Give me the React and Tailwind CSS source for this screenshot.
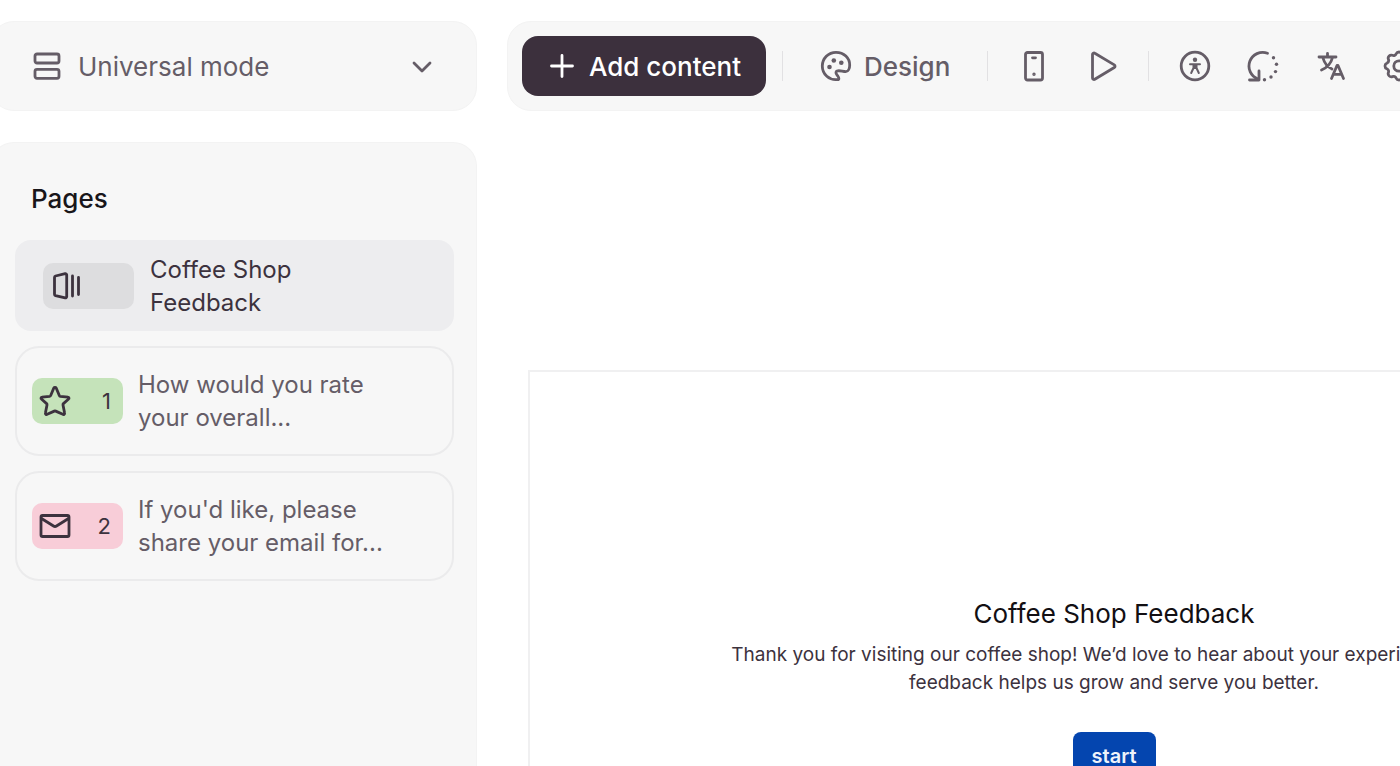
import React from "react";

// Shared props for the outlined icons
const stroke = {
  fill: "none",
  stroke: "currentColor",
  strokeWidth: 2.8,
  strokeLinecap: "round",
  strokeLinejoin: "round",
  "aria-hidden": true,
};

const RowsIcon = () => (
  <svg {...stroke} viewBox="0 0 30 30" className="size-[30px] shrink-0">
    <rect x="3" y="3" width="24" height="9" rx="2" />
    <rect x="3" y="18.300" width="24" height="9" rx="2" />
  </svg>
);

const ChevronIcon = () => (
  <svg {...stroke} viewBox="0 0 20 20" className="size-5 shrink-0">
    <path d="M2 7l8 8 8-8" />
  </svg>
);

const PlusIcon = () => (
  <svg {...stroke} viewBox="0 0 24 24" className="size-6 shrink-0">
    <path d="M12 1.500v21M1.500 12h21" />
  </svg>
);

const PaletteIcon = () => (
  <svg {...stroke} viewBox="0 0 32 32" className="size-8 shrink-0">
    <path d="M18.500 29.500C9 31 2.300 24 2.300 16A13.700 13.700 0 0 1 16 2.300c8 0 13.700 5.700 13.700 12.700 0 3.500-1.500 6.700-4 6.700-3 0-6-1.700-8.700-.7-2 1-.5 3.500.8 5 .9 1.200 1.200 2.800.7 3.500z" />
    <g fill="currentColor" stroke="none">
      <circle cx="9.500" cy="17" r="2.300" />
      <circle cx="13.800" cy="10.500" r="2.300" />
      <circle cx="21.300" cy="12.700" r="2.300" />
    </g>
  </svg>
);

const PhoneIcon = () => (
  <svg {...stroke} viewBox="0 0 32 32" className="size-8">
    <rect x="7.500" y="2.500" width="17" height="27.500" rx="2" />
    <path d="M14.500 7.800h3" />
    <circle cx="16" cy="24.300" r=".7" strokeWidth="2" />
  </svg>
);

const PlayIcon = () => (
  <svg {...stroke} viewBox="0 0 32 32" className="size-8">
    <path d="M6.500 4.500v23.500a1.500 1.500 0 0 0 2.300 1.300l19.500-11.800a1.500 1.500 0 0 0 0-2.600L8.800 3.200a1.500 1.500 0 0 0-2.300 1.300z" />
  </svg>
);

const AccessibilityIcon = () => (
  <svg {...stroke} viewBox="0 0 32 32" className="size-8">
    <circle cx="16" cy="16" r="13.800" />
    <circle cx="16" cy="9.800" r="2.200" fill="currentColor" stroke="none" />
    <path strokeWidth="2" d="M11 14.300h10M14.500 14.500v3.500l-2.300 5M17.500 14.500v3.500l2.300 5M15 15h2v3h-2z" />
  </svg>
);

const ResetIcon = () => (
  <svg {...stroke} viewBox="0 0 32 32" className="size-8">
    <path d="M20.500 3.200A13.500 13.500 0 1 0 11 29" />
    <path d="M2.500 30h9.500v-9" />
    <g fill="currentColor" stroke="none">
      <circle cx="26.500" cy="7.800" r="1.700" />
      <circle cx="29.500" cy="14.300" r="1.700" />
      <circle cx="28.500" cy="21.600" r="1.700" />
      <circle cx="24" cy="27" r="1.700" />
      <circle cx="17.500" cy="29.800" r="1.700" />
    </g>
  </svg>
);

const TranslateIcon = () => (
  <svg {...stroke} viewBox="0 0 32 32" className="size-8">
    <path d="M4 7h17M12.500 3.500V7M17.500 7.500c-1.500 6-5 10-11 12.500M8 8c1.500 5.500 4.500 9 9 11" />
    <path d="M16.500 28.500L22 15.500h1l5.500 13M19 24.300h7.500" />
  </svg>
);

const GearIcon = () => (
  <svg {...stroke} viewBox="0 0 32 32" className="size-8">
    <path d="M13.200 3.800c1-2.400 4.600-2.400 5.600 0 .6 1.500 2.300 2.200 3.800 1.500 2.400-1 5 1.600 4 4-.6 1.500.1 3.200 1.600 3.900 2.400 1 2.400 4.600 0 5.600-1.500.6-2.200 2.300-1.600 3.800 1 2.400-1.600 5-4 4-1.500-.6-3.200.1-3.800 1.600-1 2.400-4.600 2.400-5.600 0-.6-1.500-2.300-2.200-3.800-1.600-2.400 1-5-1.600-4-4 .6-1.500-.1-3.200-1.600-3.800-2.400-1-2.400-4.600 0-5.600 1.500-.7 2.200-2.400 1.600-3.900-1-2.400 1.600-5 4-4 1.500.7 3.200 0 3.800-1.500z" />
    <circle cx="16" cy="16" r="5.200" />
  </svg>
);

const WelcomeIcon = () => (
  <svg {...stroke} viewBox="0 0 32 32" className="size-8">
    <path d="M5.500 6l9.700-2.300a1.300 1.300 0 0 1 1.500 1.200v21.800a1.300 1.300 0 0 1-1.500 1.200L5.500 25.600a1.500 1.500 0 0 1-1-1.400V7.400A1.500 1.500 0 0 1 5.500 6z" />
    <path d="M22.500 6v20M28.500 7.500v17" />
  </svg>
);

const StarIcon = () => (
  <svg {...stroke} viewBox="0 0 32 32" className="size-8">
    <path d="M14.700 3.200a1.500 1.500 0 0 1 2.600 0l3 7.300q.3.700 1 .8l7.700.9a1 1 0 0 1 .6 1.800l-5.200 4.600q-.6.600-.4 1.400l1.600 8a1.200 1.200 0 0 1-1.800 1.300l-7.100-3.200q-.7-.3-1.400 0l-7.100 3.200a1.200 1.200 0 0 1-1.800-1.300l1.600-8q.2-.8-.4-1.400L2.400 14a1 1 0 0 1 .6-1.800l7.700-.9q.7-.1 1-.8z" />
  </svg>
);

const MailIcon = () => (
  <svg {...stroke} viewBox="0 0 32 32" className="size-8">
    <rect x="2" y="5.500" width="28" height="21" rx="1.500" />
    <path d="M2.500 8.500L14.500 16q1.500 1 3 0l12-7.500" />
  </svg>
);

const Divider = () => <span className="h-[30px] w-px shrink-0 bg-[#e2e1e3]" />;

const toolGroups = [
  [
    { label: "Mobile preview", Icon: PhoneIcon },
    { label: "Preview", Icon: PlayIcon },
  ],
  [
    { label: "Accessibility", Icon: AccessibilityIcon },
    { label: "Reset", Icon: ResetIcon },
    { label: "Translate", Icon: TranslateIcon },
    { label: "Settings", Icon: GearIcon },
  ],
];

const questions = [
  { number: 1, text: "How would you rate your overall...", Icon: StarIcon, chip: "bg-[#c5e3ba]" },
  { number: 2, text: "If you'd like, please share your email for...", Icon: MailIcon, chip: "bg-[#f8cdd8]" },
];

const chipClasses = "flex h-[46px] w-[91px] shrink-0 items-center justify-between rounded-[10px] pl-[7px] pr-3 text-[#3c323e]";

function Sidebar() {
  return (
    <aside className="-ml-2.5 flex w-[487px] shrink-0 flex-col gap-[31px]">
      <div className="flex h-[90px] items-center rounded-3xl border border-[#f3f3f3] bg-[#f7f7f7] pl-[41px] pr-[44px] text-[#655d67]">
        <RowsIcon />
        <select aria-label="Form mode" className="min-w-0 flex-1 appearance-none bg-transparent pl-4 pt-0.5 text-[26px] leading-8">
          <option>Universal mode</option>
        </select>
        <ChevronIcon />
      </div>

      <nav aria-labelledby="pages-title" className="flex flex-1 flex-col rounded-t-3xl border border-b-0 border-[#f3f3f3] bg-[#f7f7f7] pl-6 pr-[22px] pt-10">
        <h2 id="pages-title" className="pl-4 text-[26px] font-medium leading-8 text-[#19161a]">
          Pages
        </h2>
        <ul className="mt-[25px] flex flex-col gap-[15px]">
          <li>
            <button className="flex h-[91px] w-full items-center gap-4 rounded-2xl bg-[#ededef] pl-7 text-left">
              <span className={`${chipClasses} bg-[#dddddf]`}>
                <WelcomeIcon />
              </span>
              <span className="w-[252px] text-2xl leading-[33px] text-[#3c323e]">Coffee Shop Feedback</span>
            </button>
          </li>
          {questions.map(({ number, text, Icon, chip }) => (
            <li key={number}>
              <button className="flex h-[110px] w-full items-center gap-[15px] rounded-3xl border-2 border-[#ebebec] pl-[15px] text-left">
                <span className={`${chipClasses} ${chip}`}>
                  <Icon />
                  <span className="text-[22px]">{number}</span>
                </span>
                <span className="w-[252px] text-2xl leading-[33px] text-[#655d67]">{text}</span>
              </button>
            </li>
          ))}
        </ul>
      </nav>
    </aside>
  );
}

function Toolbar() {
  return (
    <div className="flex h-[90px] w-full min-w-[1193px] shrink-0 items-center rounded-3xl border border-[#f3f3f3] bg-[#f7f7f7] pl-3.5 text-[#655d67]">
      <button className="mr-4 flex h-[60px] shrink-0 items-center gap-[15px] rounded-2xl bg-[#3c303d] pl-7 pr-[25px] text-[26px] font-medium text-white">
        <PlusIcon />
        Add content
      </button>
      <Divider />
      <button className="flex shrink-0 items-center gap-3 px-[37px] text-[26px] font-medium">
        <PaletteIcon />
        Design
      </button>
      {toolGroups.map((tools, i) => (
        <React.Fragment key={i}>
          <Divider />
          <div className="flex shrink-0 gap-9 px-[30px]">
            {tools.map(({ label, Icon }) => (
              <button key={label} aria-label={label}>
                <Icon />
              </button>
            ))}
          </div>
        </React.Fragment>
      ))}
    </div>
  );
}

function FormPreview() {
  return (
    <section className="ml-[21px] mt-[259px] flex w-[1172px] flex-1 flex-col items-center border-2 border-b-0 border-[#f0f0f1] pt-[222px] text-center">
      <h1 className="text-[26px] leading-10 text-[#120f13]">Coffee Shop Feedback</h1>
      <p className="mt-[7px] text-[19px] leading-7 text-[#3c323e]">
        Thank you for visiting our coffee shop! We’d love to hear about your experience. Your
        <br />
        feedback helps us grow and serve you better.
      </p>
      <button className="mt-[35px] h-12 shrink-0 rounded-lg bg-[#0445af] px-[19px] text-xl font-semibold text-[#eef3fb]">
        start
      </button>
    </section>
  );
}

function App() {
  return (
    <div className="flex h-screen gap-[30px] overflow-hidden bg-white pt-[21px] font-['Inter',sans-serif]">
      <Sidebar />
      <main className="flex min-w-0 flex-1 flex-col">
        <Toolbar />
        <FormPreview />
      </main>
    </div>
  );
}

export default App;
